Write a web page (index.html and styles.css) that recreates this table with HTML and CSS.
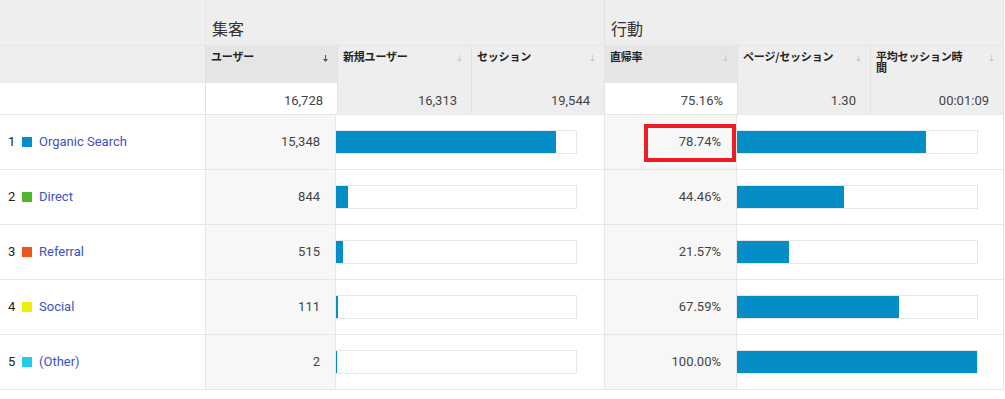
FILE: index.html
```html
<!DOCTYPE html>
<html lang="ja">
<head>
<meta charset="utf-8">
<title>チャネル</title>
<link rel="stylesheet" href="styles.css">
</head>
<body>
<div class="report">
  <div class="row head-grid group-row">
    <div class="cell blank"></div>
    <div class="cell group span3">集客</div>
    <div class="cell group span3">行動</div>
  </div>
  <div class="row head-grid title-row">
    <div class="cell blank"></div>
    <div class="cell head sorted"><span class="h-text">ユーザー</span><svg class="arrow dark" width="5" height="7" viewBox="0 0 5 7"><path d="M2 0h1v4h2L2.5 7 0 4h2z"/></svg></div>
    <div class="cell head"><span class="h-text">新規ユーザー</span><svg class="arrow" width="5" height="7" viewBox="0 0 5 7"><path d="M2 0h1v4h2L2.5 7 0 4h2z"/></svg></div>
    <div class="cell head"><span class="h-text">セッション</span><svg class="arrow" width="5" height="7" viewBox="0 0 5 7"><path d="M2 0h1v4h2L2.5 7 0 4h2z"/></svg></div>
    <div class="cell head sorted"><span class="h-text">直帰率</span><svg class="arrow" width="5" height="7" viewBox="0 0 5 7"><path d="M2 0h1v4h2L2.5 7 0 4h2z"/></svg></div>
    <div class="cell head"><span class="h-text">ページ/セッション</span><svg class="arrow" width="5" height="7" viewBox="0 0 5 7"><path d="M2 0h1v4h2L2.5 7 0 4h2z"/></svg></div>
    <div class="cell head"><span class="h-text">平均セッション時間</span><svg class="arrow" width="5" height="7" viewBox="0 0 5 7"><path d="M2 0h1v4h2L2.5 7 0 4h2z"/></svg></div>
  </div>
  <div class="row head-grid total-row">
    <div class="cell blank white"></div>
    <div class="cell total white">16,728</div>
    <div class="cell total">16,313</div>
    <div class="cell total">19,544</div>
    <div class="cell total white">75.16%</div>
    <div class="cell total">1.30</div>
    <div class="cell total">00:01:09</div>
  </div>

  <div class="row data-grid data-row">
    <div class="cell label"><span class="num">1</span><span class="sq c1"></span><a class="link">Organic Search</a></div>
    <div class="cell value">15,348</div>
    <div class="cell barcell"><div class="frame"><div class="fill" style="width:91.75%"></div></div></div>
    <div class="cell value marked"><span class="highlight"></span>78.74%</div>
    <div class="cell barcell"><div class="frame"><div class="fill" style="width:78.74%"></div></div></div>
  </div>
  <div class="row data-grid data-row">
    <div class="cell label"><span class="num">2</span><span class="sq c2"></span><a class="link">Direct</a></div>
    <div class="cell value">844</div>
    <div class="cell barcell"><div class="frame"><div class="fill" style="width:5.05%"></div></div></div>
    <div class="cell value">44.46%</div>
    <div class="cell barcell"><div class="frame"><div class="fill" style="width:44.46%"></div></div></div>
  </div>
  <div class="row data-grid data-row">
    <div class="cell label"><span class="num">3</span><span class="sq c3"></span><a class="link">Referral</a></div>
    <div class="cell value">515</div>
    <div class="cell barcell"><div class="frame"><div class="fill" style="width:3.08%"></div></div></div>
    <div class="cell value">21.57%</div>
    <div class="cell barcell"><div class="frame"><div class="fill" style="width:21.57%"></div></div></div>
  </div>
  <div class="row data-grid data-row">
    <div class="cell label"><span class="num">4</span><span class="sq c4"></span><a class="link">Social</a></div>
    <div class="cell value">111</div>
    <div class="cell barcell"><div class="frame"><div class="fill" style="width:0.66%"></div></div></div>
    <div class="cell value">67.59%</div>
    <div class="cell barcell"><div class="frame"><div class="fill" style="width:67.59%"></div></div></div>
  </div>
  <div class="row data-grid data-row">
    <div class="cell label"><span class="num">5</span><span class="sq c5"></span><a class="link">(Other)</a></div>
    <div class="cell value">2</div>
    <div class="cell barcell"><div class="frame"><div class="fill" style="width:0.01%"></div></div></div>
    <div class="cell value">100.00%</div>
    <div class="cell barcell"><div class="frame"><div class="fill" style="width:100%"></div></div></div>
  </div>
</div>
</body>
</html>
```

FILE: styles.css
```css
* { box-sizing: border-box; }

body {
  margin: 0;
  background: #fff;
  font-family: Roboto, "Noto Sans CJK JP", sans-serif;
  color: #333;
}

.report {
  width: 1004px;
}

.row {
  display: grid;
}

.head-grid {
  grid-template-columns: 206px 132px 134px 133px 133px 133px 133px;
}

.data-grid {
  grid-template-columns: 206px 130px 269px 132px 267px;
}

.cell {
  border-right: 1px solid #e2e2e2;
  background: #eeeeee;
}

.span3 { grid-column: span 3; }

/* group row */
.group-row {
  height: 46px;
  border-bottom: 1px solid #e6e6e6;
}
.group {
  display: flex;
  align-items: flex-end;
  padding: 0 0 7px 6px;
  font-family: "Noto Sans CJK JP", sans-serif;
  font-size: 16px;
  line-height: 20px;
  color: #333;
}
.group-row .blank { border-right-color: #e6e6e6; }

/* title row */
.title-row {
  height: 37px;
}
.head {
  display: flex;
  align-items: flex-start;
  padding: 5px 9px 0 5px;
  font-family: "Noto Sans CJK JP", sans-serif;
  font-size: 11px;
  font-weight: bold;
  line-height: 11px;
  color: #222;
}
.head.sorted { background: #e5e5e5; }
.h-text {
  width: 97px;
  letter-spacing: -0.2px;
}
.arrow {
  margin-left: auto;
  margin-top: 4px;
  fill: #cdcdcd;
  flex: none;
}
.arrow.dark { fill: #555; }

/* totals row */
.total-row {
  height: 32px;
  border-bottom: 1px solid #e6e6e6;
}
.total {
  display: flex;
  align-items: flex-end;
  justify-content: flex-end;
  padding: 0 14px 6px 0;
  font-size: 13px;
  line-height: 15px;
  color: #444;
}
.white { background: #fff; }

/* data rows */
.data-row {
  height: 55px;
  border-bottom: 1px solid #e6e6e6;
}
.data-row .cell { background: #fff; border-right-color: #e6e6e6; }

.label {
  display: flex;
  align-items: center;
  padding-left: 8px;
  padding-bottom: 2px;
  font-size: 13px;
}
.num {
  width: 14px;
  color: #222;
}
.sq {
  width: 10px;
  height: 10px;
  margin-right: 7px;
  margin-top: 1px;
}
.c1 { background: #058dc7; }
.c2 { background: #50b432; }
.c3 { background: #ed561b; }
.c4 { background: #edef00; }
.c5 { background: #24cbe5; }
.link {
  color: #3d52c4;
  text-decoration: none;
}

.data-row .value {
  display: flex;
  align-items: center;
  justify-content: flex-end;
  padding-right: 15px;
  padding-bottom: 2px;
  font-size: 13px;
  color: #444;
  background: #f7f7f7;
}
.data-row .value.marked { position: relative; }
.highlight {
  position: absolute;
  left: 39px;
  top: 9px;
  width: 92px;
  height: 38px;
  border: 4px solid #ec1c24;
}

.barcell {
  display: flex;
  align-items: center;
}
.frame {
  display: flex;
  width: 241px;
  height: 24px;
  border: 1px solid #e6e6e6;
  border-left: 0;
}
.fill {
  min-width: 1px;
  height: 100%;
  background: #058dc7;
}
```
